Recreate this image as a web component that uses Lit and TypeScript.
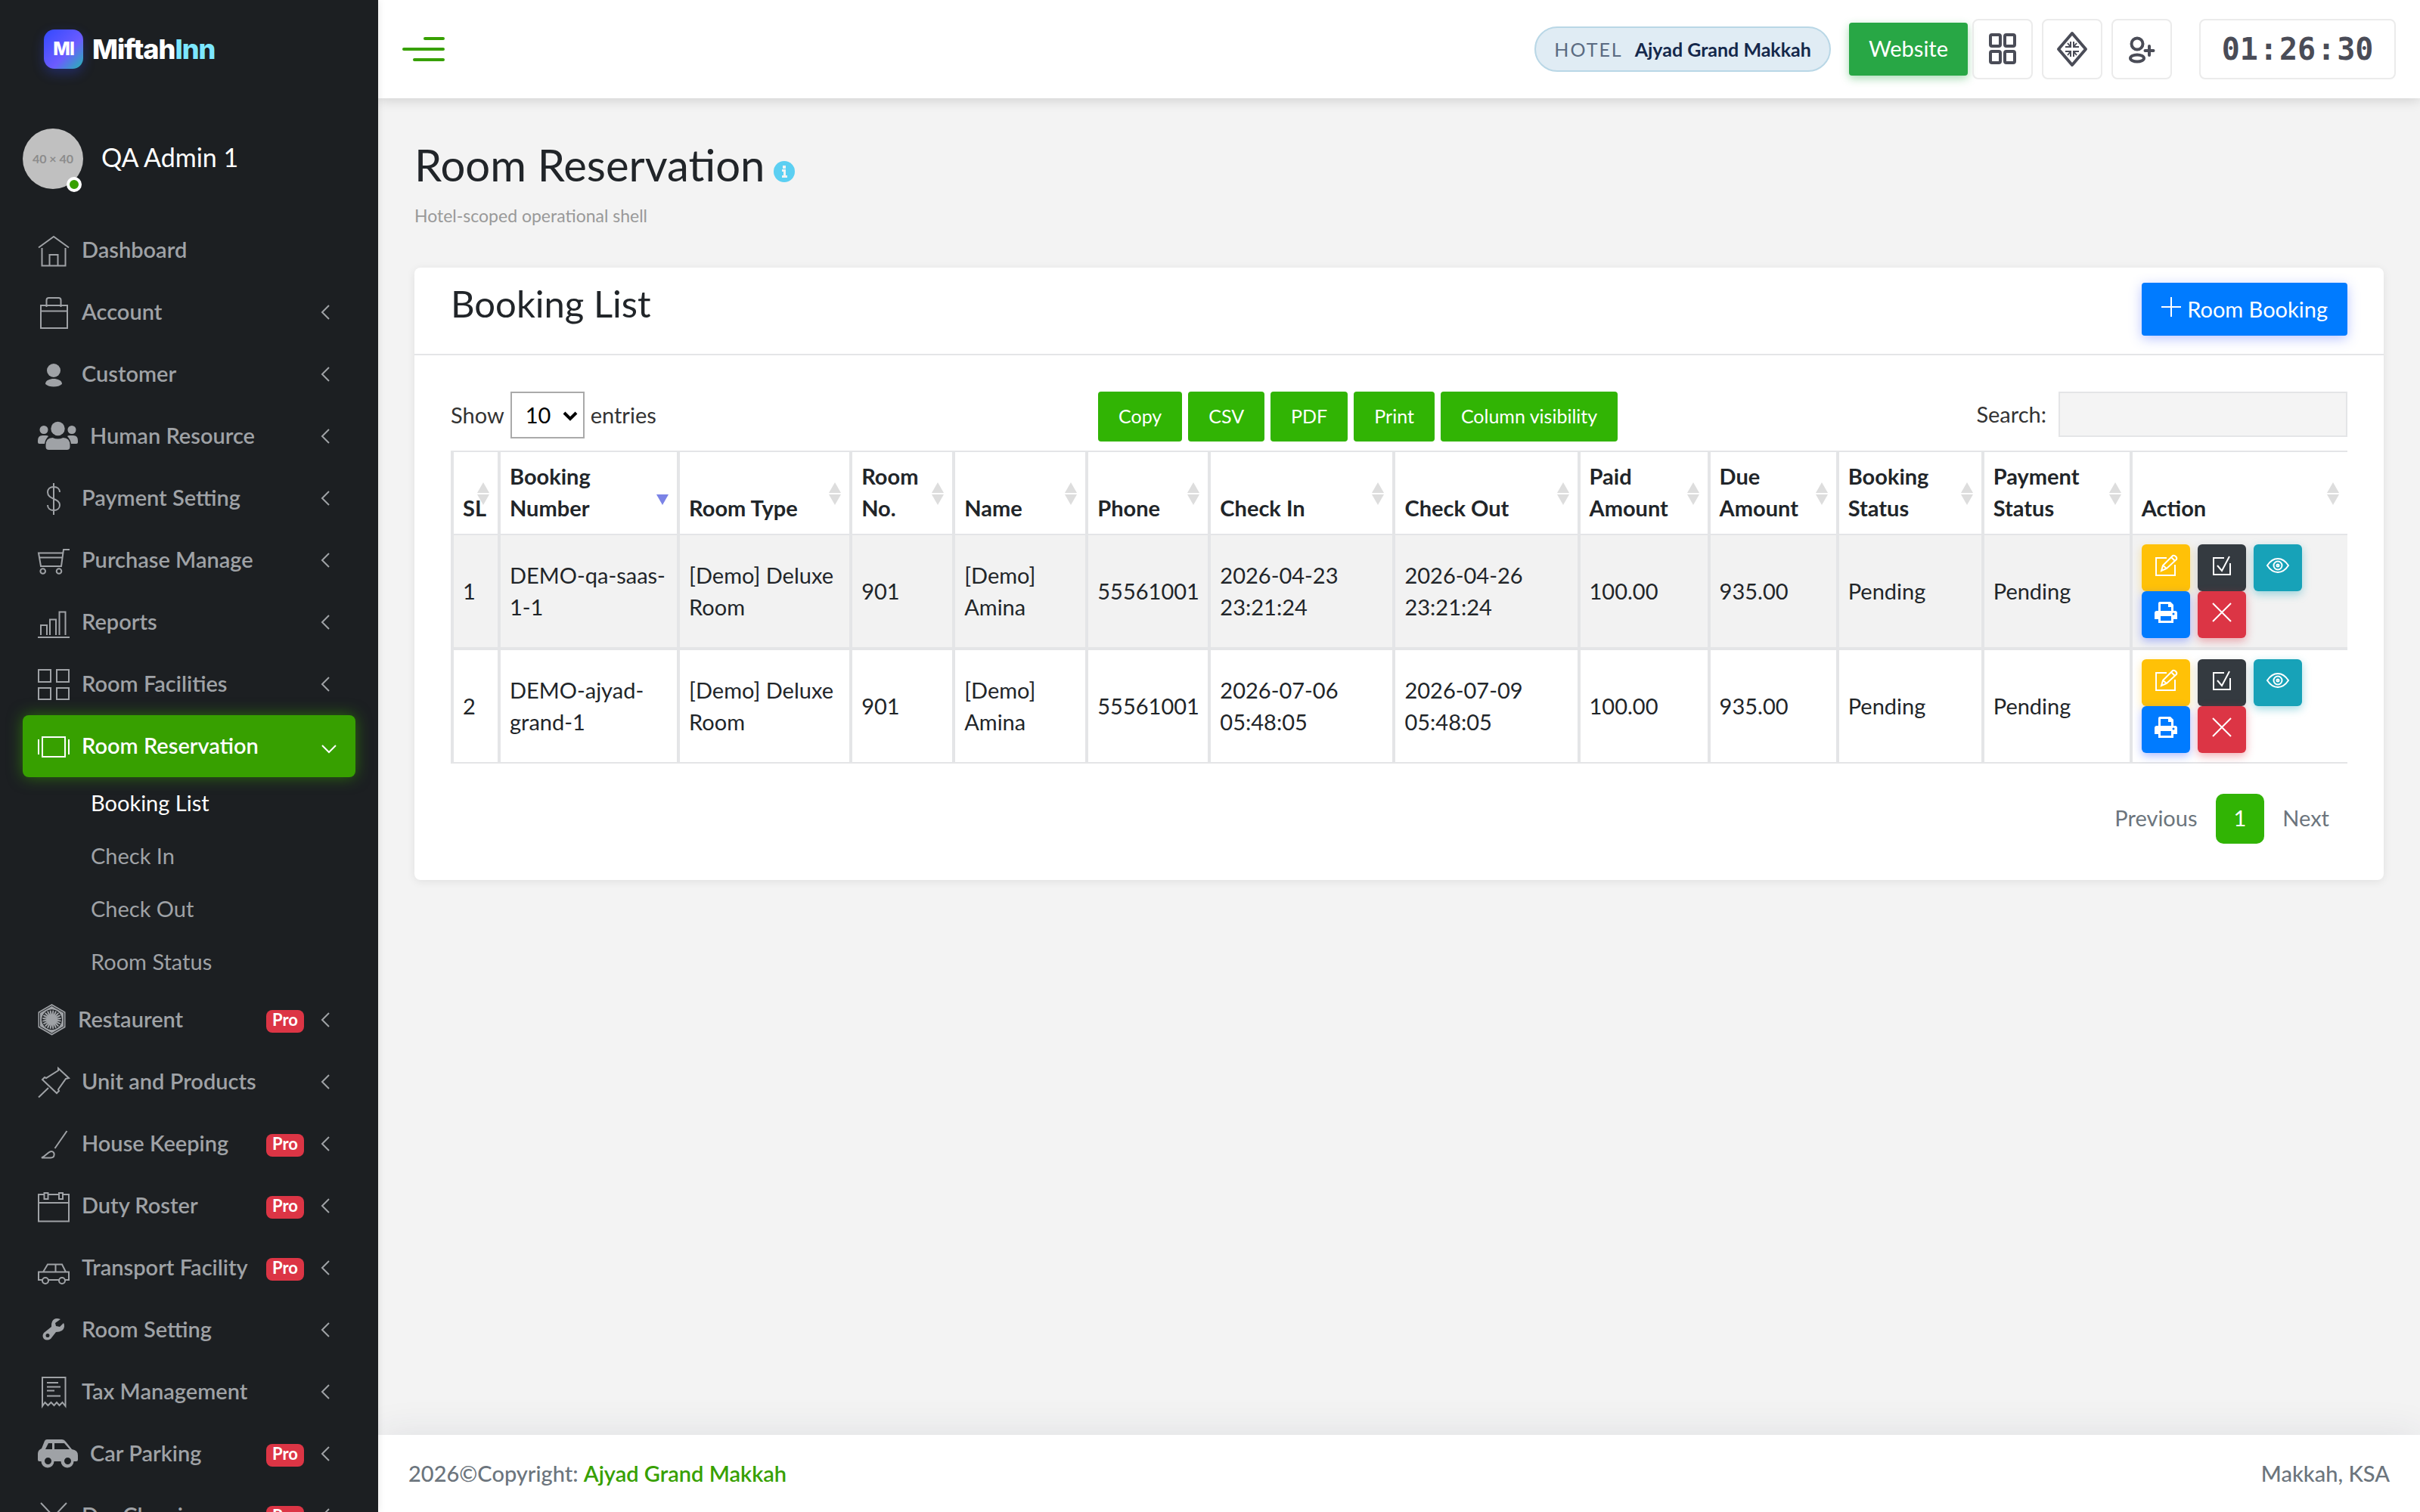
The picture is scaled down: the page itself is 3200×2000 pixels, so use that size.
import { css, html, LitElement, nothing, svg } from "lit";
import { customElement, property, state } from "lit/decorators.js";
import { classMap } from "lit/directives/class-map.js";

interface MenuItem {
  icon: string;
  label: string;
  pro?: boolean;
  leaf?: boolean;
  children?: string[];
}

const MENU: MenuItem[] = [
  { icon: "home", label: "Dashboard", leaf: true },
  { icon: "bag", label: "Account" },
  { icon: "user", label: "Customer" },
  { icon: "users", label: "Human Resource" },
  { icon: "money", label: "Payment Setting" },
  { icon: "cart", label: "Purchase Manage" },
  { icon: "bars", label: "Reports" },
  { icon: "grid", label: "Room Facilities" },
  {
    icon: "slider",
    label: "Room Reservation",
    children: ["Booking List", "Check In", "Check Out", "Room Status"],
  },
  { icon: "order", label: "Restaurent", pro: true },
  { icon: "pin", label: "Unit and Products" },
  { icon: "brush", label: "House Keeping", pro: true },
  { icon: "calendar", label: "Duty Roster", pro: true },
  { icon: "car", label: "Transport Facility", pro: true },
  { icon: "wrench", label: "Room Setting" },
  { icon: "receipt", label: "Tax Management" },
  { icon: "carSide", label: "Car Parking", pro: true },
  { icon: "cross", label: "Dry Cleaning", pro: true },
];

// relative column widths, shared out over the full table width
const COLUMNS = [
  { label: "SL", width: 62 },
  { label: "Booking Number", width: 237, sorted: true },
  { label: "Room Type", width: 228 },
  { label: "Room No.", width: 136 },
  { label: "Name", width: 176 },
  { label: "Phone", width: 162 },
  { label: "Check In", width: 244 },
  { label: "Check Out", width: 244 },
  { label: "Paid Amount", width: 172 },
  { label: "Due Amount", width: 170 },
  { label: "Booking Status", width: 192 },
  { label: "Payment Status", width: 196 },
  { label: "Action", width: 288 },
];
const TOTAL_WIDTH = COLUMNS.reduce((sum, c) => sum + c.width, 0);

const ROWS = [
  ["1", "DEMO-qa-saas-1-1", "[Demo] Deluxe Room", "901", "[Demo] Amina", "55561001", "2026-04-23 23:21:24", "2026-04-26 23:21:24", "100.00", "935.00", "Pending", "Pending"],
  ["2", "DEMO-ajyad-grand-1", "[Demo] Deluxe Room", "901", "[Demo] Amina", "55561001", "2026-07-06 05:48:05", "2026-07-09 05:48:05", "100.00", "935.00", "Pending", "Pending"],
];

const ACTIONS = [
  { icon: "edit", label: "Edit", tone: "warning" },
  { icon: "check", label: "Check in", tone: "dark" },
  { icon: "eye", label: "View", tone: "info" },
  { icon: "print", label: "Print", tone: "primary" },
  { icon: "close", label: "Cancel", tone: "danger" },
];

const EXPORTS = ["Copy", "CSV", "PDF", "Print", "Column visibility"];

const spokes = Array.from({ length: 20 }, (_, i) => i * 18);

// [width, height, shapes]
const ICONS: Record<string, [number, number, unknown]> = {
  home: [42, 42, svg`<path d="M1 17.500L21 3l20 14.500M5.500 18v23.500h31V18M15.500 41V27h11v14"/>`],
  bag: [42, 42, svg`<path d="M4 12h35v30H4zM4 19.500h35M11.500 14V5q0-3 3-3h13q3 0 3 3v9"/>`],
  user: [42, 42, svg`<g class="fill"><circle cx="21" cy="16" r="9"/><path d="M10 34c0-5 6-7 11-7s11 2 11 7q-4 3.500-11 3.500T10 34z"/></g>`],
  users: [53, 42, svg`<g class="fill"><circle cx="26.500" cy="11" r="9.200"/><circle cx="8" cy="12.500" r="5.500"/><circle cx="45" cy="12.500" r="5.500"/><path d="M0 27q0-7 6-7h5q2 0 3 1-4 4-5 10H2q-2 0-2-2zM53 27q0-7-6-7h-5q-2 0-3 1 4 4 5 10h7q2 0 2-2zM10.500 33q0-10 9-10 7 3 14 0 9 0 9 10v2q0 4-4 4h-24q-4 0-4-4z"/></g>`],
  money: [42, 42, svg`<path d="M21 1v42M29 13c0-4-3-7-8-7s-8 3-8 7c0 10 16 8 16 17 0 4-3 7-8 7s-8-3-8-7"/>`],
  cart: [42, 42, svg`<path d="M42 7h-8l-3 22H4L1 11.500h32M2 17.500h31"/><circle cx="6.700" cy="35.500" r="3.300"/><circle cx="28" cy="35.500" r="3.300"/>`],
  bars: [42, 42, svg`<path d="M0 41h42M4 38V25h8v13M16 38V17.500h8V38M28.500 38V7.500h8V38"/>`],
  grid: [42, 42, svg`<path d="M1 2h16v16H1zM25 2h16v16H25zM1 26h16v15H1zM25 26h16v15H25z"/>`],
  slider: [42, 42, svg`<path d="M6 9h30v26H6zM1 12v20M41 12v20"/>`],
  order: [37, 42, svg`
    <path class="fill" d="M18.500 0l18 10.500v20.500l-18 10.500L.500 31V10.500z"/>
    <path class="hole" d="M18.500 2.500l16 9.200v18l-16 9.300-16-9.300v-18z"/>
    <circle class="hole" cx="18.500" cy="20.700" r="13"/>
    ${spokes.map((a) => svg`<path class="spoke" d="M17.500 7.700h2l-1 6z" transform="rotate(${a} 18.500 20.700)"/>`)}`],
  pin: [42, 42, svg`<path d="M1 41.500L14 29M27 3l14 13-4 1-10 14 1 2-3 3L6 18l3-3 2 1L27 6z"/>`],
  brush: [42, 42, svg`<path d="M38.500 4L22.500 27M5 39.500c6-3 9-8.500 13-8.500 5 0 5 8.500-1 8.500z"/>`],
  calendar: [42, 42, svg`<path d="M8 6H1v35.500h40V6h-7M14 6h13.500M1 17h40M8.500 4h5v8h-5zM28 4h5v8h-5z"/>`],
  car: [42, 42, svg`<path d="M6 37H1V26.500h40V37h-5M14 37h14M7 26.500l6-10h19l5 10M23.500 16.500v10"/><circle cx="10" cy="38" r="4"/><circle cx="32" cy="38" r="4"/>`],
  wrench: [42, 42, svg`<path class="fill" fill-rule="evenodd" d="M30 7q-8-3-11 3-1.500 3-1 7L8 25q-3 4 0 8 4 3 9 0l7-9q10 0 11-7 .500-3-1-5l-5 5-5-1-1-4zM13 26a2.500 2.500 0 1 1 0 5 2.500 2.500 0 0 1 0-5z"/>`],
  receipt: [42, 42, svg`<path d="M6 40V2h30.500v38l-4-5-4 4-3.500-4-3.500 4-4-4-4 4-4-4zM12 9h15M12 14.500h18M12 19.500h10M12 26.500h18"/>`],
  carSide: [53, 42, svg`<path class="fill" fill-rule="evenodd" d="M12 2h20q3 0 5 3l8 10q8 1 8 8v6q0 2-2 2h-3.500a8.500 8.500 0 0 1-17 0h-9a8.500 8.500 0 0 1-17 0H2q-2 0-2-2v-8q0-5 5-7l4-10q1-2 3-2zM14 7l-4 8h9V7zM22 7v8h20l-7-8zM13.500 26a4.500 4.500 0 1 0 0 9 4.500 4.500 0 0 0 0-9zM39.500 26a4.500 4.500 0 1 0 0 9 4.500 4.500 0 0 0 0-9z"/>`],
  cross: [42, 42, svg`<path d="M4 4l34 36M38 4L4 40"/>`],
  left: [12, 20, svg`<path d="M11 1L2 10l9 9"/>`],
  down: [20, 20, svg`<path d="M1 9l9 9 9-9"/>`],
  caret: [18, 12, svg`<path stroke-width="4" d="M1 2l8 8 8-8"/>`],
  apps: [36, 42, svg`<g stroke-width="4"><rect x="2" y="2" width="13" height="15" rx="2"/><rect x="21" y="2" width="13" height="15" rx="2"/><rect x="2" y="24" width="13" height="15" rx="2"/><rect x="21" y="24" width="13" height="15" rx="2"/></g>`],
  diamond: [40, 46, svg`<path stroke-width="4" stroke-linejoin="round" d="M20 2l18 21-18 21L2 23z"/><path d="M11 20h7v-7M29 20h-7v-7M11 26h7v7M29 26h-7v7M18 20l-4-5M22 20l4-5M18 26l-4 5M22 26l4 5"/>`],
  userPlus: [34, 36, svg`<g stroke-width="4"><circle cx="11" cy="11" r="7.500"/><ellipse cx="11" cy="30" rx="9" ry="4.500"/><path stroke-linecap="round" d="M27 14v12M21.500 20h11"/></g>`],
  info: [28, 28, svg`<circle class="fill" cx="14" cy="14" r="14"/><path class="mark" d="M11 11h5v8h2v3h-7v-3h2v-5h-2zM12 6h4v4h-4z"/>`],
  plus: [26, 26, svg`<path d="M13 0v26M0 13h26"/>`],
  edit: [30, 30, svg`<path d="M16 5H2v23h25V14M9 22l2-7L24 2q2-1 4 1t1 4L16 19zM11 15l5 4M22 4l5 5"/>`],
  check: [28, 30, svg`<path d="M17 5H3v22h22V12M8 15l6 7L24 3"/>`],
  eye: [30, 22, svg`<path d="M1 11Q7 2 15 2t14 9q-6 9-14 9T1 11z"/><circle cx="15" cy="11" r="5.500"/><circle cx="15" cy="11" r="1.500"/>`],
  print: [30, 30, svg`<path class="fill" fill-rule="evenodd" d="M7 1h14l4 4v8h2q3 0 3 3v8h-5v5H5v-5H0v-8q0-3 3-3h2V3q0-2 2-2zM8 4v9h14V8h-4V4zM8 20v6h14v-6zM25 15.500a1.500 1.500 0 1 0 0 3 1.500 1.500 0 0 0 0-3z"/>`],
  close: [26, 26, svg`<path d="M1 1l24 24M25 1L1 25"/>`],
};

@customElement("ui-icon")
export class UiIcon extends LitElement {
  static styles = css`
    :host {
      display: inline-flex;
      flex: none;
    }
    svg {
      display: block;
      overflow: visible;
      fill: none;
      stroke: currentColor;
      stroke-width: 2;
    }
    .fill {
      fill: currentColor;
      stroke: none;
    }
    .hole {
      stroke: #1c1f22;
      stroke-width: 1;
    }
    .spoke {
      fill: #1c1f22;
      stroke: none;
    }
    .mark {
      fill: #f3f3f3;
      stroke: none;
    }
  `;

  @property() name = "";

  render() {
    const [w, h, shapes] = ICONS[this.name];
    return html`<svg width=${w} height=${h} viewBox="0 0 ${w} ${h}" aria-hidden="true">${shapes}</svg>`;
  }
}

@customElement("side-bar")
export class SideBar extends LitElement {
  static styles = css`
    :host {
      display: block;
      flex: none;
      width: 500px;
      overflow: hidden;
      z-index: 2;
      background: #1c1f22;
      color: #9fa2a6;
      box-shadow: 0 0 10px rgba(0, 0, 0, 0.1);
    }
    a {
      color: inherit;
      text-decoration: none;
    }
    .brand {
      display: flex;
      align-items: center;
      gap: 12px;
      height: 130px;
      padding-left: 58px;
      font: 800 36px/1 Inter, sans-serif;
      letter-spacing: -1px;
      color: #fff;
    }
    .logo {
      display: grid;
      place-items: center;
      width: 52px;
      height: 52px;
      border-radius: 14px;
      background: linear-gradient(135deg, #3249ff, #6c5cff 60%, #22b8b0);
      box-shadow: 0 6px 16px rgba(50, 73, 255, 0.3);
      font-size: 24px;
    }
    .brand em {
      font-style: normal;
      color: #7ce7ff;
    }
    .user {
      display: flex;
      align-items: center;
      gap: 24px;
      height: 80px;
      margin: 40px 30px;
      color: #fff;
      font-size: 34px;
    }
    .name {
      padding-bottom: 4px;
    }
    .avatar {
      position: relative;
      display: grid;
      place-items: center;
      width: 80px;
      height: 80px;
      border-radius: 50%;
      background: #c0c0c0;
      color: #8c8c8c;
      font: 700 16px/1 Lato, sans-serif;
    }
    .avatar::after {
      content: "";
      position: absolute;
      right: 2px;
      bottom: -4px;
      width: 12px;
      height: 12px;
      border: 4px solid #fff;
      border-radius: 50%;
      background: #37a000;
    }
    ul {
      margin: 0;
      padding: 0 30px;
      list-style: none;
    }
    .item {
      display: flex;
      align-items: center;
      gap: 16px;
      height: 82px;
      padding: 0 34px 0 20px;
      border-radius: 8px;
      font-weight: 600;
    }
    .label {
      flex: 1;
      padding-bottom: 2px;
      white-space: nowrap;
    }
    .item.active {
      padding-right: 25px;
      background: #37a000;
      color: #fff;
      box-shadow: 0 0 20px rgba(55, 160, 0, 0.6);
    }
    .pro {
      width: 50px;
      height: 30px;
      margin: 4px 6px 0 0;
      border-radius: 8px;
      background: #dc3545;
      color: #fff;
      font-size: 22px;
      line-height: 26px;
      font-weight: 700;
      text-align: center;
    }
    .sub {
      padding: 0 0 0 90px;
    }
    .sub a {
      display: block;
      padding-bottom: 2px;
      line-height: 68px;
    }
    .sub .current {
      color: #fff;
    }
  `;

  @state() private current = "Booking List";

  renderItem(item: MenuItem) {
    const open = !!item.children;
    return html`
      <li>
        <a href="#" class=${classMap({ item: true, active: open })}>
          <ui-icon name=${item.icon}></ui-icon>
          <span class="label">${item.label}</span>
          ${item.pro ? html`<span class="pro">Pro</span>` : nothing}
          ${item.leaf ? nothing : html`<ui-icon name=${open ? "down" : "left"}></ui-icon>`}
        </a>
        ${open
          ? html`<ul class="sub">
              ${item.children!.map(
                (child) => html`<li>
                  <a
                    href="#"
                    class=${classMap({ current: child === this.current })}
                    @click=${() => (this.current = child)}
                    >${child}</a
                  >
                </li>`
              )}
            </ul>`
          : nothing}
      </li>
    `;
  }

  render() {
    return html`
      <a href="#" class="brand">
        <span class="logo">MI</span>
        <span>Miftah<em>Inn</em></span>
      </a>
      <div class="user">
        <span class="avatar">40 × 40</span>
        <span class="name">QA Admin 1</span>
      </div>
      <nav>
        <ul>
          ${MENU.map((item) => this.renderItem(item))}
        </ul>
      </nav>
    `;
  }
}

@customElement("top-bar")
export class TopBar extends LitElement {
  static styles = css`
    :host {
      display: flex;
      align-items: center;
      flex: none;
      height: 130px;
      padding: 0 32px;
      z-index: 1;
      background: #fff;
      box-shadow: 0 2px 16px rgba(0, 0, 0, 0.16);
    }
    button {
      padding: 0;
      border: 0;
      background: none;
      font: inherit;
      color: inherit;
    }
    .toggle {
      display: flex;
      flex-direction: column;
      align-items: flex-end;
      gap: 10px;
      width: 56px;
      margin-right: auto;
    }
    .toggle span {
      width: 100%;
      height: 4px;
      border-radius: 2px;
      background: #37a000;
    }
    .toggle span:first-child {
      width: 50%;
    }
    .toggle span:last-child {
      width: 75%;
    }
    .hotel {
      display: flex;
      align-items: center;
      gap: 16px;
      height: 56px;
      margin-right: 24px;
      padding: 0 24px;
      border: 2px solid #b9d7e6;
      border-radius: 30px;
      background: #e0ecf4;
      color: #5b6b82;
      font-size: 25px;
    }
    .hotel span {
      letter-spacing: 2px;
    }
    .hotel strong {
      color: #14284b;
    }
    .website {
      height: 70px;
      margin-right: 6px;
      padding: 0 26px;
      border-radius: 4px;
      background: #28a745;
      color: #fff;
      line-height: 68px;
      text-decoration: none;
      box-shadow: 0 4px 12px rgba(40, 167, 69, 0.4);
    }
    .tools {
      display: flex;
      gap: 12px;
    }
    .tools button,
    .clock {
      display: flex;
      align-items: center;
      justify-content: center;
      box-sizing: border-box;
      height: 80px;
      border: 2px solid #ebebeb;
      border-radius: 8px;
      color: #4a4c57;
    }
    .tools button {
      width: 80px;
    }
    .clock {
      gap: 2px;
      width: 260px;
      margin-left: 36px;
      font: 700 40px/1 "DejaVu Sans Mono", monospace;
    }
  `;

  render() {
    return html`
      <button class="toggle" aria-label="Toggle menu"><span></span><span></span><span></span></button>
      <div class="hotel"><span>HOTEL</span><strong>Ajyad Grand Makkah</strong></div>
      <a class="website" href="#">Website</a>
      <div class="tools">
        <button aria-label="Full screen"><ui-icon name="apps"></ui-icon></button>
        <button aria-label="Language"><ui-icon name="diamond"></ui-icon></button>
        <button aria-label="Account"><ui-icon name="userPlus"></ui-icon></button>
      </div>
      <div class="clock"><span>01</span><span>:</span><span>26</span><span>:</span><span>30</span></div>
    `;
  }
}

@customElement("booking-list")
export class BookingList extends LitElement {
  static styles = css`
    :host {
      display: block;
      border-radius: 8px;
      background: #fff;
      box-shadow: 0 2px 12px rgba(0, 0, 0, 0.08);
    }
    button {
      padding: 0;
      border: 0;
      font: inherit;
      color: #fff;
    }
    header {
      display: flex;
      align-items: flex-start;
      justify-content: space-between;
      height: 94px;
      padding: 20px 48px 0;
      border-bottom: 2px solid #e4e5e7;
    }
    h2 {
      margin: 0;
      font-size: 49px;
      font-weight: 400;
      line-height: 54px;
    }
    .add {
      display: flex;
      align-items: center;
      gap: 8px;
      height: 70px;
      padding: 0 26px;
      border-radius: 4px;
      background: #007bff;
      box-shadow: 0 4px 16px rgba(60, 90, 255, 0.35);
      white-space: nowrap;
    }
    .add ui-icon {
      padding-bottom: 6px;
    }
    .body {
      padding: 48px;
    }
    .controls {
      display: grid;
      grid-template-columns: repeat(3, 1fr);
      height: 66px;
      margin-bottom: 12px;
      color: #333;
    }
    .controls label {
      display: flex;
      align-items: center;
      gap: 8px;
      height: 62px;
    }
    .controls .search {
      justify-content: flex-end;
      gap: 16px;
      height: 60px;
    }
    .pick {
      position: relative;
    }
    .pick ui-icon {
      position: absolute;
      right: 10px;
      top: 26px;
      color: #000;
      pointer-events: none;
    }
    select {
      appearance: none;
      width: 98px;
      height: 62px;
      padding: 0 0 0 18px;
      border: 2px solid #aaa;
      border-radius: 0;
      background: #fff;
      color: #000;
      font: inherit;
    }
    input {
      box-sizing: border-box;
      width: 382px;
      height: 60px;
      border: 2px solid #e4e5e7;
      background: #f4f4f4;
      font: inherit;
    }
    .exports {
      display: flex;
      gap: 8px;
      padding-left: 20px;
    }
    .exports button {
      padding: 0 27px 2px;
      border-radius: 4px;
      background: #31b404;
      font-size: 25px;
      white-space: nowrap;
    }
    table {
      width: 100%;
      table-layout: fixed;
      border-spacing: 0;
    }
    th,
    td {
      padding: 12px;
      border-left: 4px solid #e4e5e7;
      border-bottom: 2px solid #e4e5e7;
      text-align: left;
      line-height: 42px;
    }
    td {
      padding-right: 8px;
    }
    th {
      position: relative;
      padding: 11px 28px 13px 12px;
      border-top: 2px solid #e4e5e7;
      vertical-align: bottom;
      font-weight: 700;
    }
    th:first-child {
      padding-right: 0;
    }
    th::before,
    th::after {
      content: "";
      position: absolute;
      right: 11px;
      border: 8px solid transparent;
    }
    th::before {
      top: 32px;
      border-bottom: 14px solid #ddd;
    }
    th::after {
      top: 56px;
      border-top: 14px solid #ddd;
    }
    th.sorted::before {
      border-bottom-color: transparent;
    }
    th.sorted::after {
      border-top-color: #7b83e6;
    }
    tbody tr:nth-child(odd) {
      background: #f2f2f2;
    }
    tr + tr td {
      border-top: 2px solid #e4e5e7;
    }
    .actions {
      display: flex;
      flex-wrap: wrap;
      column-gap: 10px;
      width: 230px;
    }
    .actions button {
      display: flex;
      align-items: center;
      justify-content: center;
      box-sizing: border-box;
      width: 64px;
      height: 62px;
      padding-bottom: 6px;
      border-radius: 6px;
    }
    .warning {
      background: #ffc107;
      box-shadow: 0 4px 12px rgba(255, 193, 7, 0.35);
    }
    .dark {
      background: #343a40;
      box-shadow: 0 4px 12px rgba(52, 58, 64, 0.2);
    }
    .info {
      background: #17a2b8;
      box-shadow: 0 4px 12px rgba(23, 162, 184, 0.4);
    }
    .primary {
      background: #007bff;
      box-shadow: 0 4px 12px rgba(60, 90, 255, 0.4);
    }
    .danger {
      background: #dc3545;
      box-shadow: 0 4px 12px rgba(220, 53, 69, 0.4);
    }
    .pages {
      display: flex;
      justify-content: flex-end;
      margin-top: 40px;
    }
    .pages button {
      height: 66px;
      padding: 0 24px 2px;
      border-radius: 10px;
      background: none;
      color: #6c757d;
    }
    .pages .current {
      background: #31b404;
      color: #fff;
    }
  `;

  render() {
    return html`
      <header>
        <h2>Booking List</h2>
        <button class="add"><ui-icon name="plus"></ui-icon>Room Booking</button>
      </header>
      <div class="body">
        <div class="controls">
          <label>
            Show
            <span class="pick">
              <select>
                <option>10</option>
                <option>25</option>
                <option>50</option>
              </select>
              <ui-icon name="caret"></ui-icon>
            </span>
            entries
          </label>
          <div class="exports">${EXPORTS.map((name) => html`<button>${name}</button>`)}</div>
          <label class="search">Search: <input type="search" /></label>
        </div>
        <table>
          <colgroup>
            ${COLUMNS.map((c) => html`<col style="width:${(c.width / TOTAL_WIDTH) * 100}%" />`)}
          </colgroup>
          <thead>
            <tr>
              ${COLUMNS.map((c) => html`<th class=${classMap({ sorted: !!c.sorted })}>${c.label}</th>`)}
            </tr>
          </thead>
          <tbody>
            ${ROWS.map(
              (row) => html`<tr>
                ${row.map((cell) => html`<td>${cell}</td>`)}
                <td>
                  <div class="actions">
                    ${ACTIONS.map(
                      (a) => html`<button class=${a.tone} aria-label=${a.label}><ui-icon name=${a.icon}></ui-icon></button>`
                    )}
                  </div>
                </td>
              </tr>`
            )}
          </tbody>
        </table>
        <div class="pages">
          <button>Previous</button>
          <button class="current">1</button>
          <button>Next</button>
        </div>
      </div>
    `;
  }
}

@customElement("app-root")
export class AppRoot extends LitElement {
  static styles = css`
    :host {
      display: flex;
      height: 100vh;
      overflow: hidden;
      background: #f3f3f3;
      color: #212529;
      font: 400 29px/42px Lato, "Open Sans", sans-serif;
    }
    .page {
      display: flex;
      flex: 1;
      flex-direction: column;
      min-width: 0;
    }
    main {
      flex: 1;
      padding: 48px;
    }
    h1 {
      display: flex;
      align-items: center;
      gap: 12px;
      margin: 0;
      font-size: 58px;
      font-weight: 400;
      line-height: 80px;
    }
    h1 ui-icon {
      padding-top: 18px;
      color: #5bcff2;
    }
    p {
      margin: 6px 0 48px;
      color: #999;
      font-size: 23px;
    }
    footer {
      display: flex;
      align-items: center;
      justify-content: space-between;
      height: 102px;
      padding: 0 40px;
      background: #fff;
      color: #6c757d;
      font-weight: 500;
      box-shadow: 0 0 50px rgba(35, 49, 80, 0.1);
    }
    footer a {
      color: #37a000;
      font-weight: 600;
      text-decoration: none;
    }
  `;

  render() {
    return html`
      <side-bar></side-bar>
      <div class="page">
        <top-bar></top-bar>
        <main>
          <h1>Room Reservation <ui-icon name="info"></ui-icon></h1>
          <p>Hotel-scoped operational shell</p>
          <booking-list></booking-list>
        </main>
        <footer>
          <span>2026©Copyright: <a href="#">Ajyad Grand Makkah</a></span>
          <span>Makkah, KSA</span>
        </footer>
      </div>
    `;
  }
}
